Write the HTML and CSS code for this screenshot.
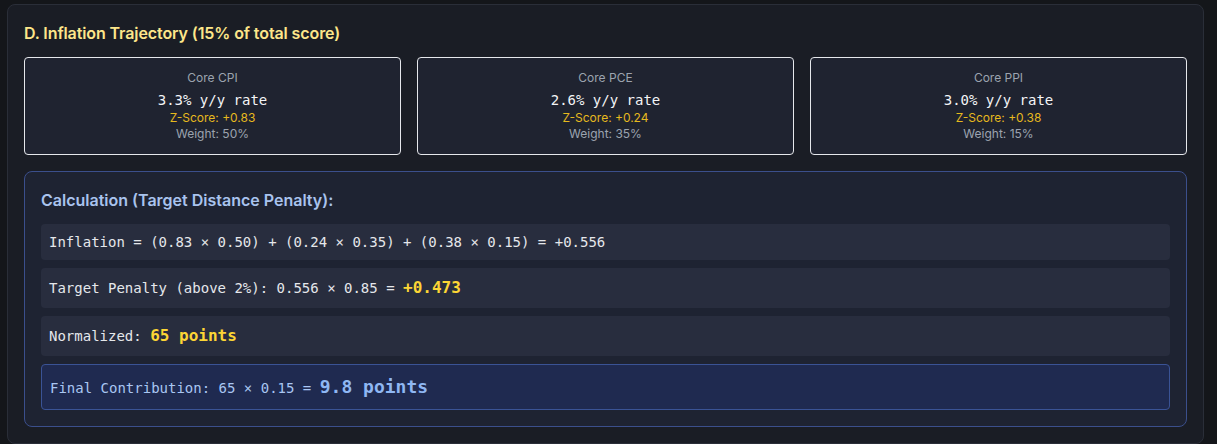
FILE: index.html
```html
<!DOCTYPE html>
<html lang="en">
<head>
<meta charset="utf-8">
<title>Inflation Trajectory</title>
<link rel="stylesheet" href="styles.css">
</head>
<body>
<section class="card">
  <h2 class="card-title">D. Inflation Trajectory (15% of total score)</h2>
  <div class="metrics">
    <div class="metric">
      <div class="metric-label">Core CPI</div>
      <div class="metric-value">3.3% y/y rate</div>
      <div class="metric-z">Z-Score: +0.83</div>
      <div class="metric-weight">Weight: 50%</div>
    </div>
    <div class="metric">
      <div class="metric-label">Core PCE</div>
      <div class="metric-value">2.6% y/y rate</div>
      <div class="metric-z">Z-Score: +0.24</div>
      <div class="metric-weight">Weight: 35%</div>
    </div>
    <div class="metric">
      <div class="metric-label">Core PPI</div>
      <div class="metric-value">3.0% y/y rate</div>
      <div class="metric-z">Z-Score: +0.38</div>
      <div class="metric-weight">Weight: 15%</div>
    </div>
  </div>
  <div class="calc">
    <h3 class="calc-title">Calculation (Target Distance Penalty):</h3>
    <div class="calc-rows">
      <div class="row">Inflation = (0.83 × 0.50) + (0.24 × 0.35) + (0.38 × 0.15) = +0.556</div>
      <div class="row">Target Penalty (above 2%): 0.556 × 0.85 = <span class="hl">+0.473</span></div>
      <div class="row">Normalized: <span class="hl">65 points</span></div>
      <div class="row row-final">Final Contribution: 65 × 0.15 = <span class="hl-final">9.8 points</span></div>
    </div>
  </div>
</section>
</body>
</html>
```
FILE: styles.css
```css
* { box-sizing: border-box; }
html, body { margin: 0; }
body {
  background: #14161a;
  padding: 4px 13px 0 7px;
  font-family: Inter, "Noto Sans", "Liberation Sans", sans-serif;
  color: #e5e7eb;
}
.card {
  background: #1a1d25;
  border: 1px solid #2a2e38;
  border-radius: 8px;
  padding: 16px;
  height: 440px;
}
.card-title {
  margin: 0 0 12px;
  font-size: 16px;
  line-height: 24px;
  font-weight: 600;
  letter-spacing: -0.1px;
  color: #fde68a;
}
.metrics {
  display: grid;
  grid-template-columns: repeat(3, 1fr);
  gap: 16px;
  margin-bottom: 16px;
}
.metric {
  background: #1f2330;
  border: 1px solid #e5e7eb;
  border-radius: 4px;
  padding: 12px;
  text-align: center;
}
.metric-label {
  font-size: 12px;
  line-height: 16px;
  color: #9ca3af;
  margin-bottom: 4px;
}
.metric-value {
  font-family: "DejaVu Sans Mono", monospace;
  font-size: 14px;
  line-height: 20px;
  color: #f3f4f6;
}
.metric-z {
  font-size: 12px;
  line-height: 16px;
  color: #e6b91e;
}
.metric-weight {
  font-size: 12px;
  line-height: 16px;
  color: #9ca3af;
}
.calc {
  background: #1e2332;
  border: 1px solid #3b4f8c;
  border-radius: 8px;
  padding: 16px;
}
.calc-title {
  margin: 0 0 12px;
  font-size: 16px;
  line-height: 24px;
  font-weight: 600;
  color: #a9c3ee;
}
.calc-rows {
  display: flex;
  flex-direction: column;
  gap: 8px;
}
.row {
  background: #282d3e;
  border-radius: 4px;
  padding: 8px;
  font-family: "DejaVu Sans Mono", monospace;
  font-size: 14px;
  line-height: 20px;
  color: #e5e7eb;
}
.hl {
  font-size: 16px;
  line-height: 24px;
  font-weight: 700;
  color: #fcd535;
}
.row-final {
  background: #1f2a50;
  border: 1px solid #3a5395;
  color: #a9c6f2;
}
.hl-final {
  font-size: 18px;
  line-height: 28px;
  font-weight: 700;
  color: #8fb7f3;
}
```
